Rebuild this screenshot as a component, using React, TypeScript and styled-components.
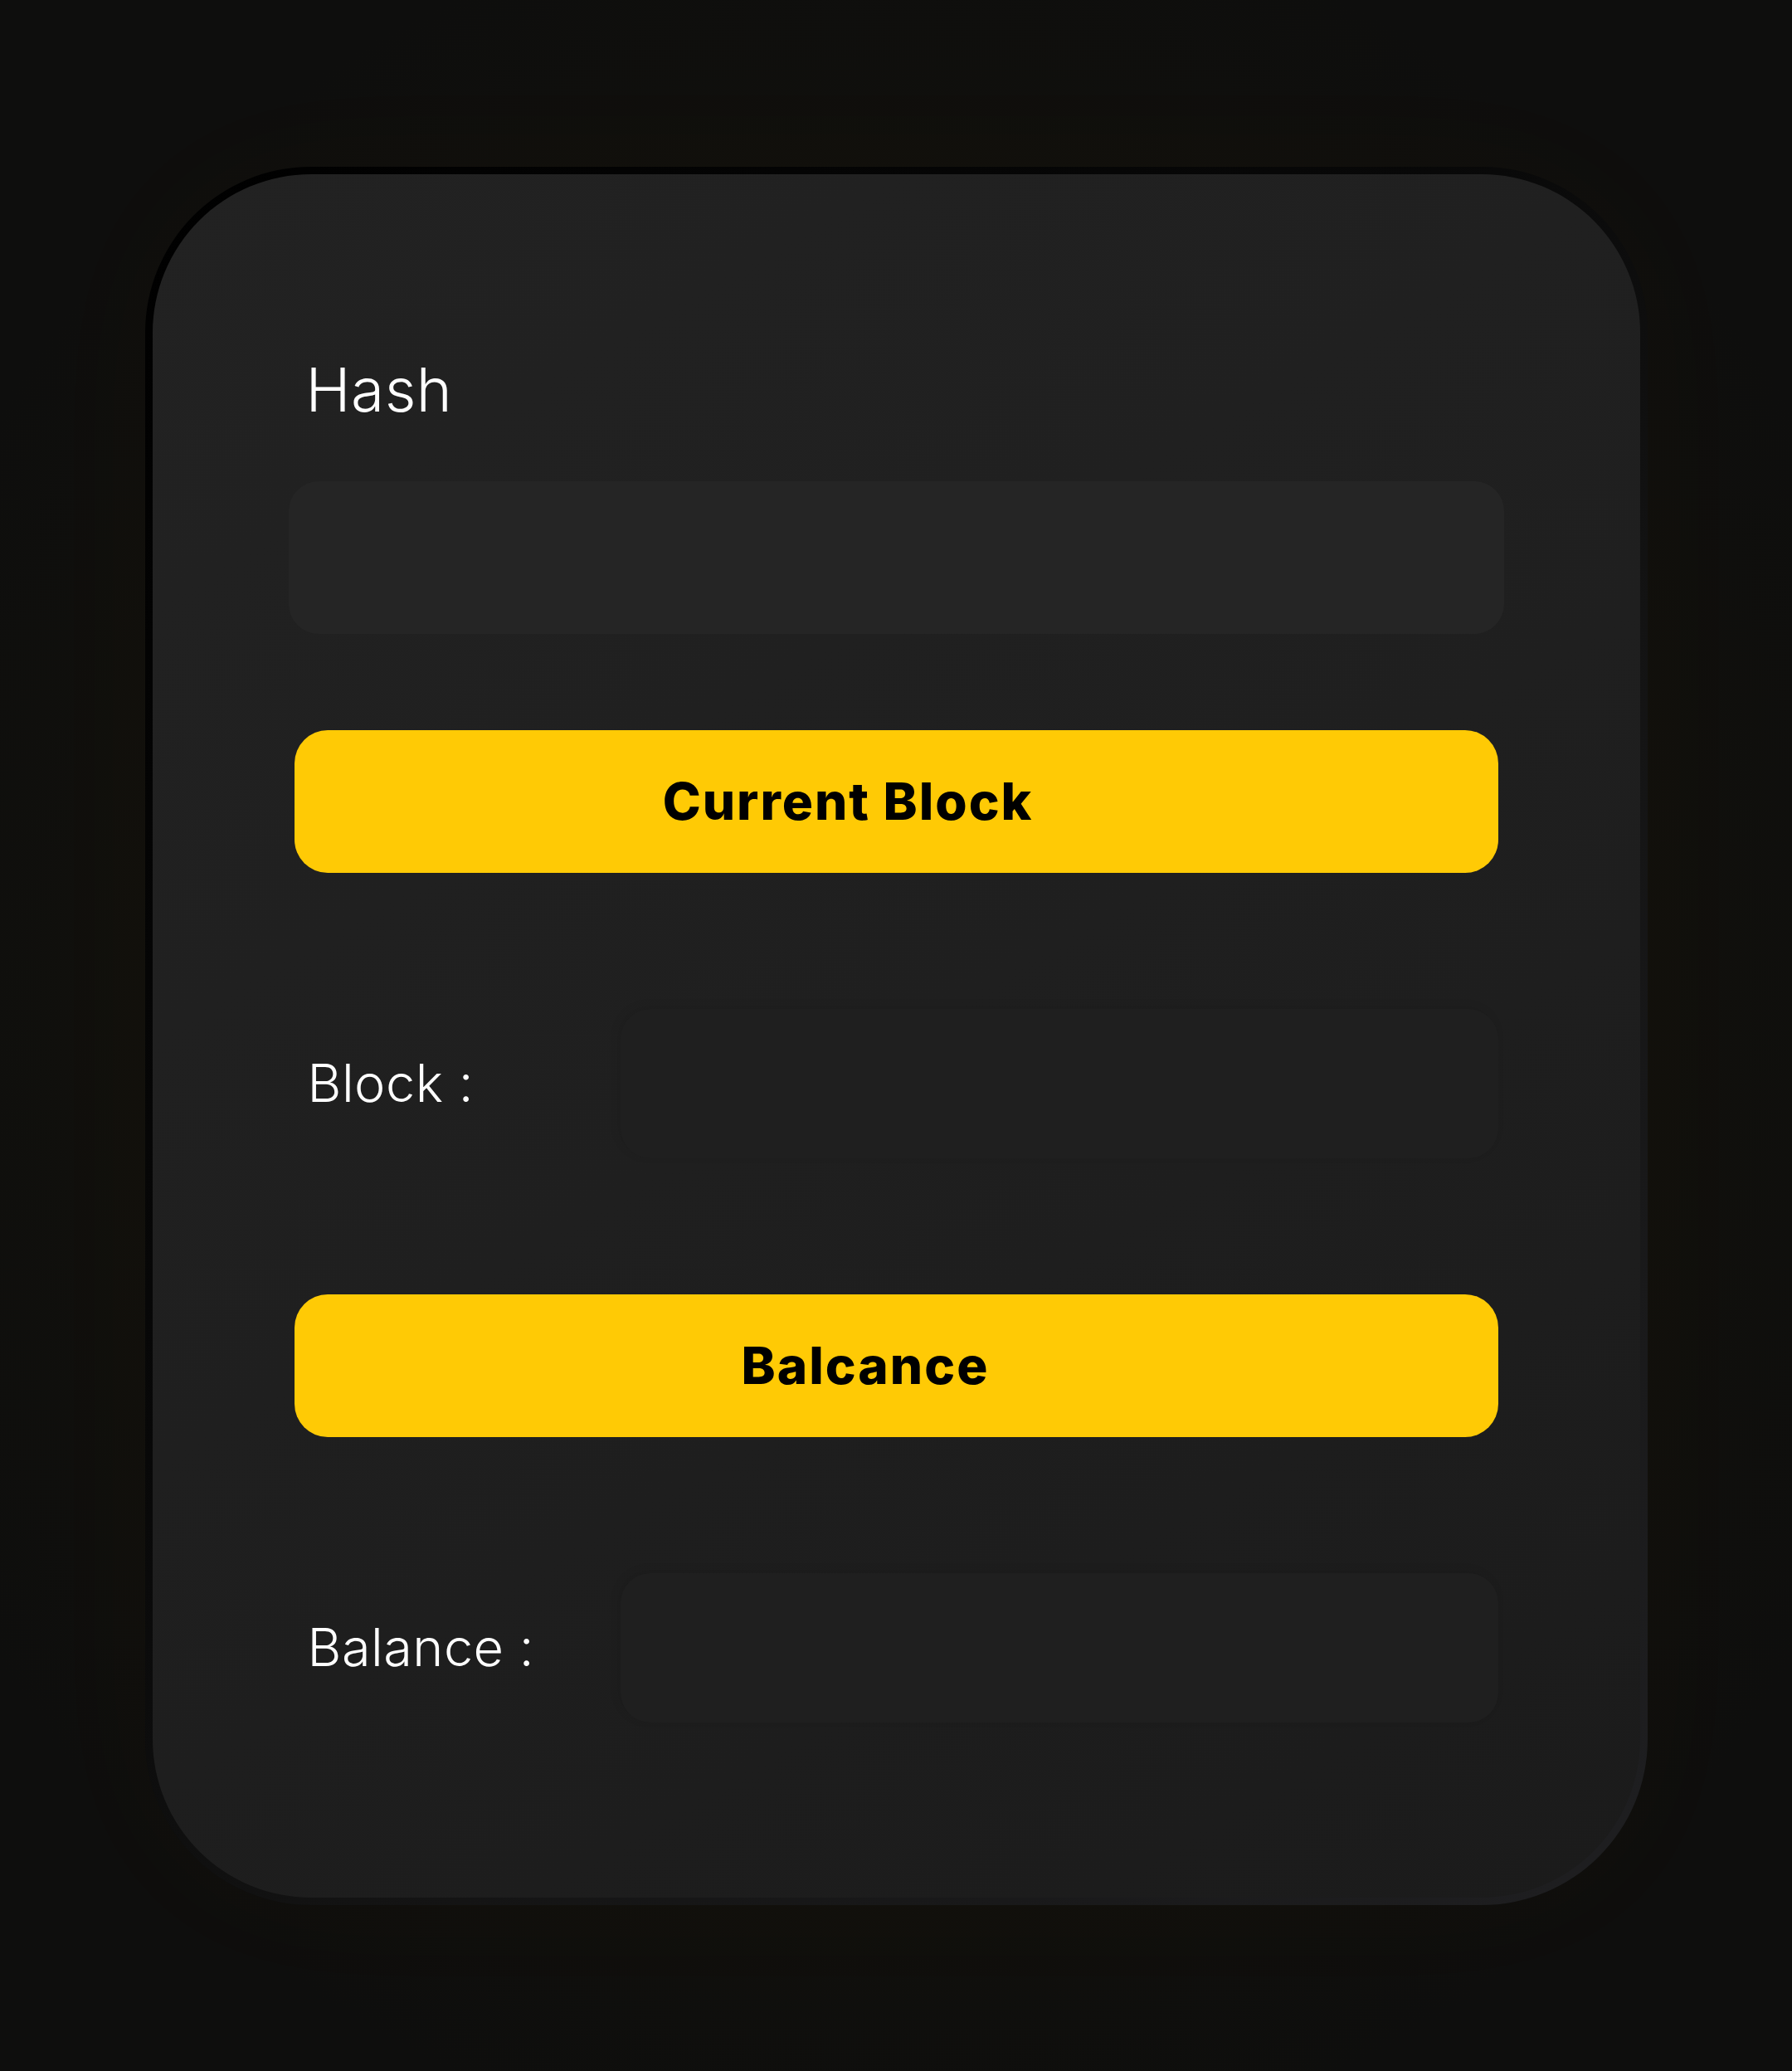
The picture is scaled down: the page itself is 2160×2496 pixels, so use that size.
import React from 'react';
import styled, { createGlobalStyle } from "styled-components";

const GlobalStyle = createGlobalStyle`
  html, body {
    margin: 0;
    padding: 0;
    background: #0e0e0c;
  }
  body {
    font-family: Inter, "Noto Sans", sans-serif;
  }
`

function App() {
    return (
        <Page>
            <GlobalStyle/>
            <Card>
                <Title>Hash</Title>
                <HashInput/>
                <ActionBtn $nudge={116}>Current Block</ActionBtn>
                <Row>
                    <RowLabel>Block :</RowLabel>
                    <Output/>
                </Row>
                <ActionBtn $nudge={74}>Balcance</ActionBtn>
                <Row>
                    <RowLabel>Balance :</RowLabel>
                    <Output/>
                </Row>
            </Card>
        </Page>
    );
}

export default App;

const Page = styled.div`
  min-height: 100vh;
  width: 100%;
  display: flex;
  justify-content: center;
  align-items: center;
  background: radial-gradient(ellipse 60% 55% at 50% 50%, #17140c 0%, #12110c 55%, #0e0e0d 100%);
`

const Card = styled.div`
  box-sizing: border-box;
  width: 1811px;
  display: flex;
  flex-direction: column;
  padding: 223px 171px 211px;
  border: 9px solid transparent;
  border-radius: 200px;
  background:
    linear-gradient(150deg, #222222 0%, #1f1f1f 50%, #1b1b1b 100%) padding-box,
    linear-gradient(135deg, #000000 0%, #080808 40%, #131313 60%, #1f1f21 100%) border-box;
  box-shadow: 0 0 180px rgba(255, 190, 0, 0.025);
`

const Title = styled.div`
  color: #ffffff;
  font-size: 73px;
  font-weight: 300;
  line-height: 73px;
  margin-left: 14px;
  letter-spacing: 0.5px;
`

const HashInput = styled.div`
  height: 184px;
  margin: 74px -7px 0;
  border-radius: 36px;
  background: #252525;
`

const ActionBtn = styled.button<{ $nudge: number }>`
  height: 172px;
  margin-top: 116px;
  border: none;
  border-radius: 40px;
  background: #ffca05;
  color: #000;
  font-family: Inter, "Noto Sans", sans-serif;
  font-size: 62px;
  font-weight: 800;
  letter-spacing: 2px;
  padding: 0 ${p => p.$nudge}px 0 0;
  cursor: pointer;
`

const Row = styled.div`
  display: flex;
  align-items: center;
  height: 180px;
  margin-top: 164px;

  & + button {
    margin-top: 164px;
  }
`

const RowLabel = styled.div`
  flex: 0 0 393px;
  box-sizing: border-box;
  padding-left: 16px;
  color: #ffffff;
  font-size: 63px;
  font-weight: 300;
  line-height: 1;
  letter-spacing: 0.5px;
`

const Output = styled.div`
  flex: 1;
  height: 180px;
  border-radius: 36px;
  background: #1f1f1f;
  box-shadow: -3px -3px 12px rgba(0, 0, 0, 0.08);
`
